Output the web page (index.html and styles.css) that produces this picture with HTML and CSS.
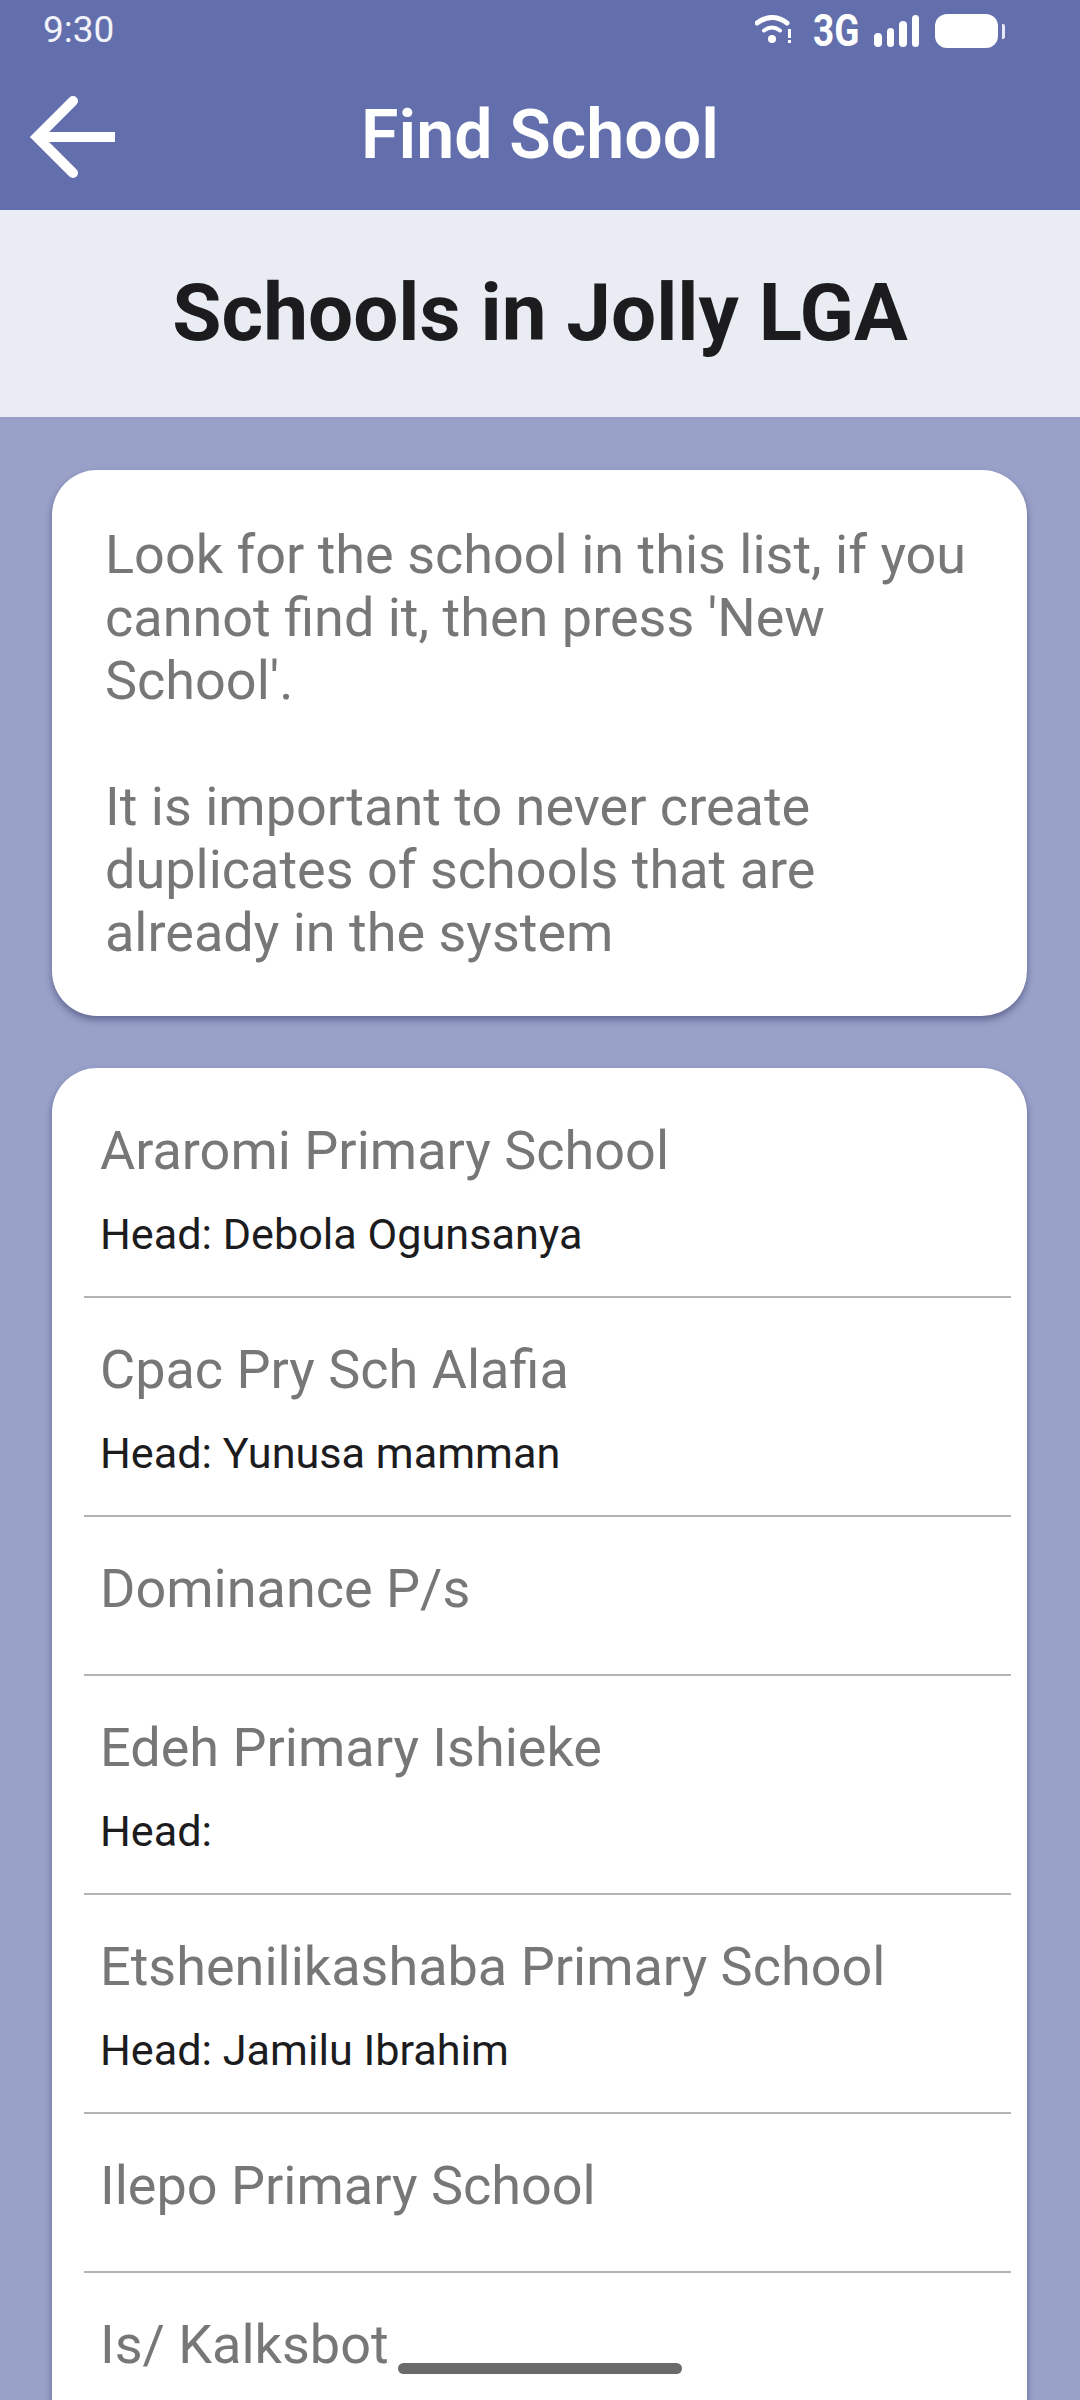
FILE: index.html
```html
<!DOCTYPE html>
<html lang="en">
<head>
<meta charset="utf-8">
<title>Find School</title>
<link rel="stylesheet" href="styles.css">
</head>
<body>
<div class="screen">
  <header class="appbar">
    <div class="status">
      <span class="time">9:30</span>
      <div class="status-icons">
        <svg class="wifi" width="38" height="30" viewBox="0 0 38 30">
          <path d="M2 8 Q17 -3 32 8" fill="none" stroke="#fff" stroke-width="5" stroke-linecap="round"/>
          <path d="M9 15.5 Q17 9.5 25 15.5" fill="none" stroke="#fff" stroke-width="4" stroke-linecap="round"/>
          <circle cx="17" cy="24" r="4" fill="#fff"/>
          <rect x="33" y="14" width="3" height="9" fill="#fff"/>
          <rect x="33" y="25" width="3" height="3" fill="#fff"/>
        </svg>
        <span class="net">3G</span>
        <div class="signal">
          <i class="bar b1"></i><i class="bar b2"></i><i class="bar b3"></i><i class="bar b4"></i>
        </div>
        <div class="battery"><div class="cell"></div><div class="nub"></div></div>
      </div>
    </div>
    <div class="titlebar">
      <svg class="back" width="92" height="92" viewBox="0 0 92 92">
        <path d="M90 45 H12" fill="none" stroke="#fff" stroke-width="10"/>
        <path d="M48 9 L12 45 L48 81" fill="none" stroke="#fff" stroke-width="10" stroke-linecap="round" stroke-linejoin="miter"/>
      </svg>
      <h1 class="title">Find School</h1>
    </div>
  </header>
  <section class="band"><h2 class="band-title">Schools in Jolly LGA</h2></section>
  <main class="content">
    <div class="card intro">
      <p class="intro-text">Look for the school in this list, if you cannot find it, then press 'New School'.</p>
      <p class="intro-text gap">It is important to never create duplicates of schools that are already in the system</p>
    </div>
    <div class="card list">
      <div class="row"><div class="name">Araromi Primary School</div><div class="head">Head: Debola Ogunsanya</div></div>
      <div class="row"><div class="name">Cpac Pry Sch Alafia</div><div class="head">Head: Yunusa mamman</div></div>
      <div class="row short"><div class="name">Dominance P/s</div></div>
      <div class="row"><div class="name">Edeh Primary Ishieke</div><div class="head">Head:</div></div>
      <div class="row"><div class="name">Etshenilikashaba Primary School</div><div class="head">Head: Jamilu Ibrahim</div></div>
      <div class="row short"><div class="name">Ilepo Primary School</div></div>
      <div class="row short last"><div class="name">Is/ Kalksbot</div></div>
    </div>
  </main>
  <div class="home"></div>
</div>
</body>
</html>
```
FILE: styles.css
```css
* { box-sizing: border-box; }
html, body { margin: 0; padding: 0; }
body { width: 1080px; height: 2400px; overflow: hidden; font-family: Roboto, sans-serif; }
.screen { position: relative; width: 1080px; height: 2400px; overflow: hidden; background: #99a1c9; display: flex; flex-direction: column; }
.appbar { height: 210px; background: #626fac; color: #fff; display: flex; flex-direction: column; flex: none; }
.status { height: 60px; padding: 8px 75px 0 43px; display: flex; justify-content: space-between; align-items: flex-start; }
.time { font-size: 37px; line-height: 43px; font-weight: 400; color: #f2f3f9; }
.status-icons { display: flex; align-items: flex-start; margin-top: 6px; }
.wifi { margin-top: 1px; }
.net { font-size: 44px; line-height: 34px; font-weight: 700; margin-left: 20px; transform: scaleX(.84); transform-origin: left; width: 45px; }
.signal { display: flex; align-items: flex-end; gap: 5px; height: 32px; margin-left: 16px; margin-top: 1px; }
.bar { display: block; width: 7.5px; background: #fff; border-radius: 4px; }
.b1 { height: 14px; } .b2 { height: 19px; } .b3 { height: 26px; } .b4 { height: 32px; }
.battery { display: flex; align-items: center; margin-left: 16px; height: 34px; }
.cell { width: 63px; height: 34px; background: #fff; border-radius: 12px; }
.nub { width: 3px; height: 15px; margin-left: 4px; background: #e6e8f3; border-radius: 0 2px 2px 0; }
.titlebar { position: relative; flex: 1; display: flex; align-items: center; justify-content: center; }
.back { position: absolute; left: 25px; top: 32px; }
.title { margin: 0; font-size: 68px; font-weight: 600; line-height: 80px; }
.band { height: 207px; flex: none; background: #eaecf4; display: flex; align-items: center; justify-content: center; padding-bottom: 2px; }
.band-title { margin: 0; font-size: 80px; font-weight: 700; color: #1c1c1e; line-height: 90px; }
.content { flex: 1; padding: 53px 53px 0 52px; display: flex; flex-direction: column; gap: 52px; }
.card { background: #fff; border-radius: 45px; box-shadow: 0 4px 7px rgba(30, 35, 80, .45); }
.intro { height: 546px; padding: 53px 52px 0 53px; }
.intro-text { margin: 0; font-size: 54px; line-height: 63px; color: #777; }
.gap { margin-top: 63px; }
.list { padding: 11px 16px 0 32px; flex: 1; border-radius: 45px 45px 0 0; }
.row { height: 219px; border-bottom: 2px solid #b4b4b4; padding: 40px 0 0 16px; }
.row.short { height: 159px; }
.row.last { border-bottom: 0; }
.name { font-size: 54px; line-height: 63px; color: #777; }
.head { font-size: 43.2px; line-height: 50px; margin-top: 28px; color: #1c1c1e; }
.home { position: absolute; left: 398px; top: 2363px; width: 284px; height: 11px; background: #6a6a6a; border-radius: 6px; }
```
